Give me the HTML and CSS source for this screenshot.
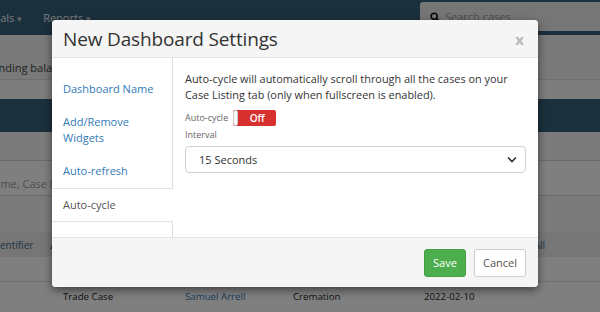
FILE: index.html
```html
<!DOCTYPE html>
<html>
<head>
<meta charset="utf-8">
<link rel="stylesheet" href="styles.css">
</head>
<body>
<div class="page">
  <div class="topnav">
    <span class="nav-item deals">Deals <span class="caret">▾</span></span>
    <span class="nav-item">Reports <span class="caret">▾</span></span>
    <div class="search">
      <svg class="search-icon" width="10" height="10" viewBox="0 0 12 12"><circle cx="5" cy="5" r="3.6" fill="none" stroke="#111" stroke-width="1.9"/><line x1="7.6" y1="7.6" x2="11" y2="11" stroke="#111" stroke-width="2.2" stroke-linecap="round"/></svg>
      <span class="search-ph">Search cases</span>
    </div>
  </div>
  <div class="band-sub"><span class="cut sub-text">Outstanding balance</span></div>
  <div class="band-white1"></div>
  <div class="band-dark"></div>
  <div class="band-white2"></div>
  <div class="filter-row"><span class="cut filter-ph">Name, Case Number</span></div>
  <div class="band-white3"></div>
  <div class="thead"><span class="cut head-text">Identifier <span class="sort">▴</span></span><span class="all">All</span></div>
  <div class="row-empty"></div>
  <div class="row">
    <span class="c1">Trade Case</span>
    <span class="c2">Samuel Arrell</span>
    <span class="c3">Cremation</span>
    <span class="c4">2022-02-10</span>
  </div>
</div>
<div class="overlay"></div>
<div class="modal">
  <div class="modal-header">
    <h4 class="modal-title">New Dashboard Settings</h4>
    <span class="close">x</span>
  </div>
  <div class="modal-body">
    <ul class="tabs">
      <li class="tab"><a>Dashboard Name</a></li>
      <li class="tab"><a>Add/Remove Widgets</a></li>
      <li class="tab"><a>Auto-refresh</a></li>
      <li class="tab active"><a>Auto-cycle</a></li>
    </ul>
    <div class="pane">
      <p class="desc">Auto-cycle will automatically scroll through all the cases on your Case Listing tab (only when fullscreen is enabled).</p>
      <div class="toggle-row">
        <span class="small-label">Auto-cycle</span>
        <span class="toggle"><span class="knob"></span><span class="toggle-text">Off</span></span>
      </div>
      <div class="small-label interval">Interval</div>
      <div class="select">
        <span>15 Seconds</span>
        <svg width="10" height="7" viewBox="0 0 10 7"><polyline points="1,1.5 5,5.5 9,1.5" fill="none" stroke="#333" stroke-width="1.6"/></svg>
      </div>
    </div>
  </div>
  <div class="modal-footer">
    <button class="btn btn-save">Save</button>
    <button class="btn btn-cancel">Cancel</button>
  </div>
</div>
</body>
</html>
```
FILE: styles.css
```css
* { box-sizing: border-box; }
html, body { margin: 0; padding: 0; }
body {
  width: 600px;
  height: 312px;
  overflow: hidden;
  font-family: "Open Sans", "Noto Sans", sans-serif;
  color: #333;
  background: #fff;
  position: relative;
}
.page { width: 600px; height: 312px; overflow: hidden; }
.topnav {
  height: 35px;
  background: #36607b;
  display: flex;
  align-items: center;
  color: #f2f2f2;
  font-size: 11px;
}
.nav-item { white-space: nowrap; margin-right: 21px; }
.deals { margin-left: -14px; }
.caret { font-size: 9px; color: #ccc; }
.search {
  margin-left: auto;
  margin-right: -10px;
  align-self: flex-start;
  margin-top: 2px;
  width: 190px;
  height: 29px;
  background: #ededed;
  border-radius: 3px;
  display: flex;
  align-items: center;
  padding-left: 10px;
  gap: 5px;
}
.search-ph { color: #999; font-size: 11px; }
.band-sub {
  height: 45px;
  background: #f2f2f2;
  border-bottom: 1px solid #dcdcdc;
  font-size: 11px;
  color: #444;
  padding-top: 25px;
  white-space: nowrap;
}
.cut { display: inline-block; }
.sub-text { margin-left: -36px; }
.band-white1 { height: 19px; background: #fafafa; }
.band-dark { height: 33px; background: #36607b; }
.band-white2 { height: 29px; background: #f7f7f7; border-bottom: 1px solid #d6d6d6; }
.filter-row {
  height: 35px;
  background: #fff;
  border-bottom: 1px solid #d6d6d6;
  font-size: 11px;
  padding-top: 15px;
  white-space: nowrap;
}
.filter-ph { color: #999; margin-left: -14px; }
.band-white3 { height: 36px; background: #f7f7f7; }
.thead {
  height: 25px;
  background: #ececec;
  display: flex;
  align-items: center;
  font-size: 10px;
  color: #3b6b8c;
  white-space: nowrap;
}
.head-text { margin-left: -9px; }
.sort { font-size: 9px; color: #666; margin-left: 14px; }
.all { margin-left: auto; margin-right: 55px; }
.row-empty { height: 25px; background: #fff; border-bottom: 1px solid #ddd; }
.row {
  height: 29px;
  background: #fff;
  font-size: 9.7px;
  color: #222;
  display: grid;
  grid-template-columns: 63px 122px 108px 131px auto;
  align-items: center;
}
.row .c1 { grid-column: 2; }
.row .c2 { grid-column: 3; color: #337ab7; }
.row .c3 { grid-column: 4; }
.row .c4 { grid-column: 5; }

.overlay {
  position: absolute;
  inset: 0;
  background: rgba(0, 0, 0, 0.5);
}
.modal {
  position: absolute;
  left: 52px;
  top: 20px;
  width: 486px;
  height: 267px;
  background: #fff;
  border-radius: 4px;
  box-shadow: 0 3px 9px rgba(0, 0, 0, 0.5);
  display: flex;
  flex-direction: column;
  overflow: hidden;
}
.modal-header {
  height: 38px;
  background: #f5f5f5;
  border-bottom: 1px solid #e3e3e3;
  display: flex;
  align-items: center;
  padding: 0 14px 0 11px;
  flex: none;
}
.modal-title {
  margin: 0;
  font-size: 19px;
  font-weight: 400;
  color: #333;
  flex: 1;
  letter-spacing: -0.15px;
}
.close {
  font-size: 15px;
  font-weight: 700;
  color: #b8b8b8;
  line-height: 1;
  margin-top: 1px;
}
.modal-body {
  flex: 1;
  display: flex;
}
.tabs {
  list-style: none;
  margin: 0;
  padding: 15px 0 0 0;
  width: 121px;
  border-right: 1px solid #dedede;
  flex: none;
}
.tab a {
  display: block;
  padding: 8px 11px;
  font-size: 11px;
  line-height: 16px;
  color: #337ab7;
  margin-bottom: 1px;
}
.tab.active {
  margin-right: -1px;
  background: #fff;
  border-top: 1px solid #e2e2e2;
  border-bottom: 1px solid #e2e2e2;
}
.tab.active a { color: #555; margin-bottom: 0; }
.pane {
  flex: 1;
  padding: 13px 12px 0 12px;
}
.desc {
  margin: 0;
  font-size: 10.9px;
  line-height: 16px;
  color: #333;
}
.toggle-row {
  display: flex;
  align-items: center;
  gap: 5px;
  margin-top: 7px;
  height: 16px;
}
.small-label {
  font-size: 9px;
  color: #666;
  line-height: 14px;
}
.toggle {
  width: 43px;
  height: 16px;
  background: #d7312f;
  border-radius: 2px;
  display: flex;
  align-items: center;
}
.knob {
  width: 5px;
  height: 16px;
  background: #fff;
  border: 1px solid #ccc;
  border-radius: 3px;
}
.toggle-text {
  flex: 1;
  text-align: center;
  color: #fff;
  font-size: 10px;
  font-weight: 600;
}
.interval { margin-top: 2px; }
.select {
  margin-top: 4px;
  height: 27px;
  border: 1px solid #cfcfcf;
  border-radius: 4px;
  display: flex;
  align-items: center;
  justify-content: space-between;
  padding: 0 8px 0 13px;
  font-size: 11px;
  color: #333;
}
.modal-footer {
  height: 50px;
  flex: none;
  background: #f5f5f5;
  border-top: 1px solid #e3e3e3;
  display: flex;
  justify-content: flex-end;
  align-items: center;
  gap: 8px;
  padding: 0 12px;
}
.btn {
  font-family: "Open Sans", "Noto Sans", sans-serif;
  font-size: 11px;
  height: 28px;
  border-radius: 3px;
  padding: 0 8px;
}
.btn-save {
  background: #4cae4c;
  border: 1px solid #45a045;
  color: #fff;
  width: 42px;
}
.btn-cancel {
  background: #fff;
  border: 1px solid #ccc;
  color: #555;
  width: 52px;
}
```
